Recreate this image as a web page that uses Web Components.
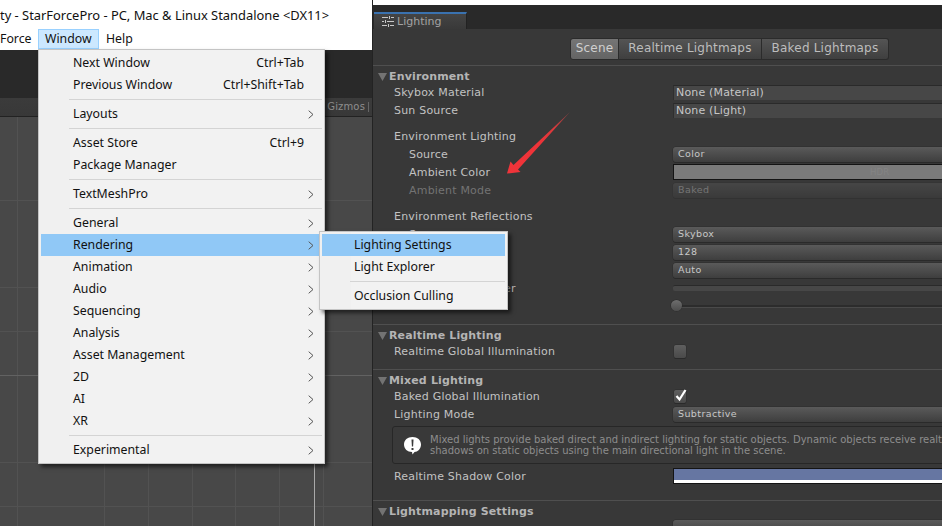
<!DOCTYPE html>
<html><head><meta charset="utf-8">
<style>
html,body{margin:0;padding:0;background:#484848}
app-shell{width:942px;height:526px}
popup-menu.main{left:38px;top:49px;width:287px}
popup-menu.sub{left:319px;top:231px;width:189px}
</style></head><body>
<app-shell>
  <left-area slot="left">
    <title-bar>ty - StarForcePro - PC, Mac &amp; Linux Standalone &lt;DX11&gt;</title-bar>
    <menu-bar>
      <bar-item>Force</bar-item>
      <bar-item active>Window</bar-item>
      <bar-item>Help</bar-item>
    </menu-bar>
    <scene-view></scene-view>
  </left-area>
  <lighting-panel slot="right">
    <insp-section heading="Environment" gap="9">
      <insp-row label="Skybox Material"><obj-field>None (Material)</obj-field></insp-row>
      <insp-row label="Sun Source"><obj-field>None (Light)</obj-field></insp-row>
      <insp-row label="Environment Lighting" top="8"></insp-row>
      <insp-row label="Source" level="1"><drop-down>Color</drop-down></insp-row>
      <insp-row label="Ambient Color" level="1"><color-field fill="#7b7b7b" hdr></color-field></insp-row>
      <insp-row label="Ambient Mode" level="1" dim><drop-down dim>Baked</drop-down></insp-row>
      <insp-row label="Environment Reflections" top="8"></insp-row>
      <insp-row label="Source" level="1"><drop-down>Skybox</drop-down></insp-row>
      <insp-row level="1"><drop-down>128</drop-down></insp-row>
      <insp-row level="1"><drop-down>Auto</drop-down></insp-row>
      <insp-row label="Intensity Multiplier" level="1"><thin-field></thin-field></insp-row>
      <insp-row level="1"><slider-field></slider-field></insp-row>
    </insp-section>
    <insp-section heading="Realtime Lighting" gap="9">
      <insp-row label="Realtime Global Illumination"><check-box></check-box></insp-row>
    </insp-section>
    <insp-section heading="Mixed Lighting" gap="15">
      <insp-row label="Baked Global Illumination"><check-box checked></check-box></insp-row>
      <insp-row label="Lighting Mode"><drop-down>Subtractive</drop-down></insp-row>
      <help-box>
        <span>Mixed lights provide baked direct and indirect lighting for static objects. Dynamic objects receive realt</span>
        <span>shadows on static objects using the main directional light in the scene.</span>
      </help-box>
      <insp-row label="Realtime Shadow Color"><color-field fill="#6676a2" bar></color-field></insp-row>
    </insp-section>
    <insp-section heading="Lightmapping Settings" gap="0">
      <insp-row><drop-down></drop-down></insp-row>
    </insp-section>
  </lighting-panel>
  <red-arrow slot="over"></red-arrow>
  <popup-menu slot="over" class="main">
    <menu-item shortcut="Ctrl+Tab">Next Window</menu-item>
    <menu-item shortcut="Ctrl+Shift+Tab">Previous Window</menu-item>
    <menu-sep></menu-sep>
    <menu-item arrow>Layouts</menu-item>
    <menu-sep></menu-sep>
    <menu-item shortcut="Ctrl+9">Asset Store</menu-item>
    <menu-item>Package Manager</menu-item>
    <menu-sep></menu-sep>
    <menu-item arrow>TextMeshPro</menu-item>
    <menu-sep></menu-sep>
    <menu-item arrow>General</menu-item>
    <menu-item arrow active>Rendering</menu-item>
    <menu-item arrow>Animation</menu-item>
    <menu-item arrow>Audio</menu-item>
    <menu-item arrow>Sequencing</menu-item>
    <menu-item arrow>Analysis</menu-item>
    <menu-item arrow>Asset Management</menu-item>
    <menu-item arrow>2D</menu-item>
    <menu-item arrow>AI</menu-item>
    <menu-item arrow>XR</menu-item>
    <menu-sep></menu-sep>
    <menu-item arrow>Experimental</menu-item>
  </popup-menu>
  <popup-menu slot="over" class="sub">
    <menu-item active>Lighting Settings</menu-item>
    <menu-item>Light Explorer</menu-item>
    <menu-sep></menu-sep>
    <menu-item>Occlusion Culling</menu-item>
  </popup-menu>
</app-shell>
<script>
const def=(name,html,extra)=>{
  customElements.define(name,class extends HTMLElement{
    constructor(){super();const r=this.attachShadow({mode:'open'});r.innerHTML=html;}
    connectedCallback(){if(extra)extra(this,this.shadowRoot);}
  });
};
const UI='"DejaVu Sans",sans-serif', MENU='"Noto Sans",sans-serif';

def('app-shell',`<style>:host{display:flex;position:relative;overflow:hidden;}</style>
 <slot name="left"></slot><slot name="right"></slot><slot name="over"></slot>`);

def('left-area',`<style>:host{display:flex;flex-direction:column;width:373px;height:526px;flex:none;overflow:hidden}</style><slot></slot>`);

def('title-bar',`<style>:host{display:flex;align-items:center;height:29px;padding-top:1px;box-sizing:border-box;background:#fff;color:#111;font:12.900px/1 ${MENU};white-space:nowrap}</style><slot></slot>`);

def('menu-bar',`<style>:host{display:flex;align-items:stretch;height:21px;padding-bottom:1px;background:#fff;box-sizing:border-box;font:12.300px/1 ${MENU};color:#111;}</style><slot></slot>`);

def('bar-item',`<style>:host{display:flex;align-items:center;box-sizing:border-box;border:1px solid transparent;padding:1px 6px 0;flex:none}
 :host(:first-child){padding:1px 0 0;border:0;width:38px}
 :host([active]){background:#cce8ff;border-color:#99d1ff;width:61px}</style><slot></slot>`);

def('scene-view',`<style>:host{display:flex;flex-direction:column;flex:1;min-height:0}
 .dark{height:48px;background:#292929}
 .bar{height:18px;background:linear-gradient(#3b3b3b,#383838);border-bottom:1px solid #222;display:flex;justify-content:flex-end;align-items:center;gap:3px;color:#8e8e8e;font:10px/1 ${UI};letter-spacing:.15px;overflow:hidden}
 .bar i{display:block;width:1px;height:10px;background:#666;flex:none}
 .bar svg{display:block;flex:none;margin-right:-4px}
 .grid{flex:1;background-color:#484848;
  background-image:
   linear-gradient(90deg,#a9a9a9,#a9a9a9),
   linear-gradient(#626262,#626262),
   repeating-linear-gradient(90deg,transparent 0 43px,#525252 43px 43.700px),
   repeating-linear-gradient(180deg,transparent 0 43px,#525252 43px 43.700px);
  background-size:1px 100%,100% 1px,100% 100%,100% 100%;
  background-position:314px 0,0 258px,-26px 0,0 40px;
  background-repeat:no-repeat;}
 </style>
 <div class="dark"></div>
 <div class="bar"><span>Gizmos</span><i></i><svg width="5" height="4" viewBox="0 0 5 4"><path d="M0 0h5L2.500 4z" fill="#888"/></svg></div>
 <div class="grid"></div>`);

def('lighting-panel',`<style>:host{display:flex;flex-direction:column;width:569px;height:526px;flex:none;overflow:hidden;background:#383838;box-sizing:border-box;color:#c2c2c2;font:11px/1 ${UI};box-shadow:-1px 0 0 #232323}
 .white{height:5px;background:#fff;flex:none}
 .strip{height:24px;flex:none;background:#292929;display:flex;align-items:flex-end;padding-left:1px}
 .tab{width:93px;height:17px;box-sizing:border-box;border-top:2px solid #3a72b0;border-right:1px solid #222;background:linear-gradient(#444,#393939);color:#a3a3a3;display:flex;align-items:center;gap:3px;padding-left:8px;}
 .tools{height:36px;flex:none;display:flex;align-items:flex-start;padding:9px 0 0 197px;box-sizing:border-box}
 .tools div{height:22px;box-sizing:border-box;display:flex;align-items:center;justify-content:center;padding-bottom:3px;background:linear-gradient(#545454,#3f3f3f);border:1px solid #2b2b2b;border-left:0;color:#bdbdbd;font-size:12px;letter-spacing:.2px;}
 .tools .a{width:49px;background:linear-gradient(#757575,#646464);border-left:1px solid #2b2b2b;border-radius:3px 0 0 3px;color:#d0d0d0}
 .tools .b{width:143px}
 .tools .c{width:127px;border-radius:0 3px 3px 0}
 </style>
 <div class="white"></div>
 <div class="strip"><div class="tab"><svg width="12" height="11" viewBox="0 0 12 11" fill="none" stroke="#c8c8c8"><path d="M0 1.500h6M9 1.500h3M0 5.500h2M5 5.500h7M0 9.500h5M8 9.500h4"/><path d="M7.500 0v3M3.500 4v3M6.500 8v3"/></svg>Lighting</div></div>
 <div class="tools"><div class="a">Scene</div><div class="b">Realtime Lightmaps</div><div class="c">Baked Lightmaps</div></div>
 <slot></slot>`);

def('insp-section',`<style>:host{display:block;flex:none;border-top:1px solid #4f4f4f;}
 .h{height:18px;margin-bottom:-1px;padding-top:4px;box-sizing:border-box;display:flex;align-items:center;gap:2px;padding-left:5px;font:bold 11px/14px ${UI};color:#b4b4b4;letter-spacing:.15px}
 svg{margin-top:-1px}
 </style><div class="h"><svg width="9" height="8" viewBox="0 0 9 8"><path d="M0 0h9L4.500 8z" fill="#737373"/></svg><span id="t"></span></div><slot></slot>`,
 (el,r)=>{r.getElementById('t').textContent=el.getAttribute('heading');el.style.paddingBottom=el.getAttribute('gap')+'px';});

def('insp-row',`<style>:host{display:flex;align-items:center;height:18px;flex:none;letter-spacing:.2px;white-space:nowrap}
 #l{box-sizing:border-box;width:300px;flex:none;padding-left:21px}
 :host([level="1"]) #l{padding-left:36px}
 :host([dim]) #l{color:#737373}
 .c{width:400px;flex:none;display:flex;align-items:center}
 </style><div id="l"></div><div class="c"><slot></slot></div>`,
 (el,r)=>{r.getElementById('l').textContent=el.getAttribute('label')||'';if(el.hasAttribute('top'))el.style.marginTop=el.getAttribute('top')+'px';});

def('obj-field',`<style>:host{display:flex;align-items:center;width:100%;height:15px;box-sizing:border-box;background:#474747;border-top:1px solid #2a2a2a;border-left:1px solid #2f2f2f;padding-left:2px;color:#c6c6c6;letter-spacing:.17px}</style><slot></slot>`);

def('drop-down',`<style>:host{display:flex;align-items:center;width:100%;height:15px;box-sizing:border-box;background:linear-gradient(#5a5a5a,#3e3e3e);border-radius:3px;box-shadow:0 1px 0 #2a2a2a,0 0 0 .5px #2c2c2c;padding-left:5px;color:#c8c8c8;font-size:9.500px;letter-spacing:.4px}
 :host([dim]){opacity:.42}</style><slot></slot>`);

def('color-field',`<style>:host{display:block;position:relative;width:100%;height:16px;box-sizing:border-box;border:1px solid #141414}
 #f{position:absolute;inset:0;display:flex;align-items:center;color:#848484;font-size:8.500px;padding-left:196px}
 #b{position:absolute;left:0;right:0;bottom:0;height:3px;background:#fff;display:none}
 :host([bar]) #b{display:block}</style><div id="f"></div><div id="b"></div>`,
 (el,r)=>{const f=r.getElementById('f');f.style.background=el.getAttribute('fill');if(el.hasAttribute('hdr'))f.textContent='HDR';});

def('thin-field',`<style>:host{display:block;width:100%;height:5px;background:#474747;border-top:1px solid #2a2a2a;border-radius:2px;margin-top:-1px}</style>`);

def('slider-field',`<style>:host{display:flex;align-items:center;position:relative;width:100%;height:12px}
 .t{width:100%;height:2px;background:#2c2c2c;border-bottom:1px solid #4a4a4a}
 .k{position:absolute;left:-2px;top:0;width:11px;height:11px;border-radius:50%;background:linear-gradient(#6e6e6e,#4d4d4d);box-shadow:0 0 0 .5px #2a2a2a}</style><div class="t"></div><div class="k"></div>`);

def('check-box',`<style>:host{display:block;width:12px;height:13px;box-sizing:border-box;border-radius:2px;background:linear-gradient(#5f5f5f,#4a4a4a);box-shadow:0 1px 0 #2a2a2a,0 0 0 .5px #2c2c2c;position:relative;margin-left:1px}
 svg{position:absolute;left:1px;top:-2px;display:none}:host([checked]) svg{display:block}</style>
 <svg width="12" height="14" viewBox="0 0 12 14"><path d="M1.500 8l3 3.500L10.500 2" fill="none" stroke="#fff" stroke-width="2.200"/></svg>`);

def('help-box',`<style>:host{display:flex;align-items:center;box-sizing:border-box;margin:3px 0 3px 19px;height:38px;width:620px;border:1px solid #272727;border-radius:3px;background:#393939;color:#8d8d8d;font-size:10px;white-space:nowrap}
 svg{flex:none;margin:0 8px 0 10px}
 .t{display:flex;flex-direction:column;}
 ::slotted(span){display:block;line-height:11.500px}</style>
 <svg width="19" height="19" viewBox="0 0 19 19"><path d="M9.500 1C14.500 1 18 4 18 8.500S14.500 16 11.500 16L9.500 18.500 9 16C4.500 16 1 13 1 8.500S4.500 1 9.500 1z" fill="#fff"/><path d="M8.500 3.500h2L10.100 10.500H8.900z" fill="#3a3a3a"/><rect x="8.500" y="12" width="2" height="2" fill="#3a3a3a"/></svg>
 <div class="t"><slot></slot></div>`);

def('red-arrow',`<style>:host{position:absolute;left:500px;top:105px;width:80px;height:75px;display:block;pointer-events:none}svg{display:block}</style>
 <svg width="80" height="75" viewBox="500 105 80 75"><defs><linearGradient id="g" x1="570" y1="112" x2="507" y2="173" gradientUnits="userSpaceOnUse"><stop offset="0" stop-color="#7a4242"/><stop offset=".25" stop-color="#d83a3c"/><stop offset=".5" stop-color="#ee3338"/><stop offset="1" stop-color="#f0343a"/></linearGradient></defs><path d="M507 173.500L510.500 161.500 513.500 165 570 112 518 169.500 520.500 172z" fill="url(#g)"/></svg>`);

def('popup-menu',`<style>:host{position:absolute;display:block;box-sizing:border-box;background:linear-gradient(90deg,#f0f0f0 31px,#f2f2f2 31px);border:1px solid #c4c4c4;padding:2px;box-shadow:3px 3px 4px rgba(0,0,0,.55);font:12.300px/1 ${MENU};color:#111;}</style><slot></slot>`);

def('menu-item',`<style>:host{display:flex;align-items:center;height:22px;box-sizing:border-box;padding:0 8px 0 32px;white-space:nowrap}
 :host([active]){background:#90c8f6}
 .s{margin-left:auto;padding-right:10px}
 svg{margin-left:auto;flex:none;display:none}
 :host([arrow]) svg{display:block}</style><span><slot></slot></span><span class="s" id="s"></span><svg width="6" height="9" viewBox="0 0 6 9" fill="none" stroke="#555"><path d="M.7.700L5 4.500.7 8.300"/></svg>`,
 (el,r)=>{const s=r.getElementById('s');const v=el.getAttribute('shortcut');if(v)s.textContent=v;else s.style.display='none';});

def('menu-sep',`<style>:host{display:block;height:7px;box-sizing:border-box;padding:3px 0 0 28px}div{height:1px;background:#d4d4d4}</style><div></div>`);
</script>
</body></html>
